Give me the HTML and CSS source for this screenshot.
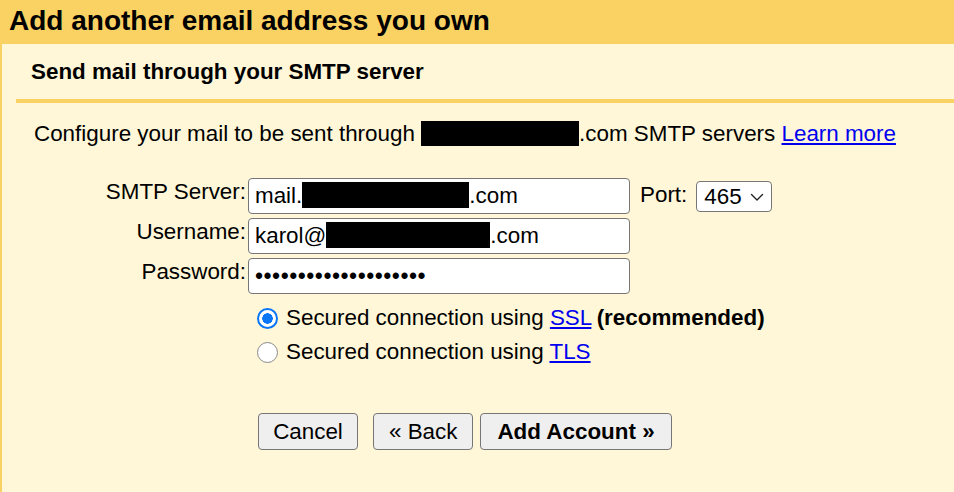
FILE: index.html
```html
<!DOCTYPE html>
<html lang="en">
  <head>
    <meta charset="UTF-8" />
    <title>Add another email address you own</title>
    <link rel="stylesheet" href="styles.css">
  </head>
  <body>
    <div class="page">
      <h1 class="title">Add another email address you own</h1>

      <div class="panel">
        <h2 class="subtitle">Send mail through your SMTP server</h2>

        <p class="intro">
          Configure your mail to be sent through <span class="redact redact-intro"></span>.com SMTP servers
          <a href="#">Learn more</a>
        </p>

        <div class="form">
          <label class="label" for="smtp">SMTP Server:</label>
          <div class="row">
            <div class="field">mail.<span class="redact redact-host"></span>.com</div>
            <label class="port-label" for="port">Port:</label>
            <div class="select-wrap">
              <select id="port" class="select">
                <option>465</option>
                <option>587</option>
                <option>25</option>
              </select>
              <svg class="chevron" width="14" height="9" viewBox="0 0 14 9">
                <path d="M1.5 1.5 L7 7 L12.5 1.5" fill="none" stroke="#222" stroke-width="1.4" stroke-linecap="round" stroke-linejoin="round"/>
              </svg>
            </div>
          </div>

          <label class="label" for="user">Username:</label>
          <div class="row">
            <div class="field">karol@<span class="redact redact-user"></span>.com</div>
          </div>

          <label class="label" for="pass">Password:</label>
          <div class="row">
            <input id="pass" class="field input" type="password" value="aaaaaaaaaaaaaaaaaaaa">
          </div>

          <div></div>
          <div class="options">
            <label class="option">
              <input type="radio" name="sec" class="radio" checked>
              <span>Secured connection using <a href="#">SSL</a> <b>(recommended)</b></span>
            </label>
            <label class="option">
              <input type="radio" name="sec" class="radio">
              <span>Secured connection using <a href="#">TLS</a></span>
            </label>
          </div>

          <div></div>
          <div class="buttons">
            <button class="btn btn-cancel">Cancel</button>
            <button class="btn btn-back">&laquo; Back</button>
            <button class="btn btn-primary">Add Account &raquo;</button>
          </div>
        </div>
      </div>
    </div>
  </body>
</html>
```

FILE: styles.css
```css
html,
body {
  margin: 0;
  height: 100%;
}
body {
  font-family: "Liberation Sans", Arial, sans-serif;
  color: #000;
  background-color: #fff7d7;
}
.page {
  min-height: 100%;
  border-left: 2px solid #fad163;
}
.title {
  margin: 0;
  height: 44px;
  padding-left: 7px;
  background-color: #fad163;
  font-size: 28px;
  line-height: 42px;
  font-weight: bold;
}
.panel {
  padding-left: 14px;
}
.subtitle {
  margin: 0;
  padding: 15px 0 0 15px;
  height: 40px;
  font-size: 22.4px;
  line-height: 26px;
  border-bottom: 4px solid #fad163;
}
.intro {
  margin: 17px 0 0 18px;
  font-size: 22.4px;
  line-height: 28px;
}
a {
  color: #0000ee;
  text-decoration: underline;
}
.redact {
  display: inline-block;
  background-color: #000;
  vertical-align: -5px;
}
.redact-intro {
  width: 158px;
  height: 25px;
}
.redact-host {
  width: 167px;
  height: 26px;
}
.redact-user {
  width: 164px;
  height: 26px;
}
.form {
  display: grid;
  grid-template-columns: 230px auto;
  column-gap: 2px;
  row-gap: 4px;
  margin-top: 30px;
  font-size: 22.4px;
}
.label {
  text-align: right;
  line-height: 28px;
}
.row {
  display: flex;
  align-items: flex-start;
}
.field {
  box-sizing: border-box;
  width: 382px;
  height: 36px;
  padding: 2px 6px 0;
  border: 1px solid #767676;
  border-radius: 4px;
  background-color: #fff;
  font-family: inherit;
  font-size: 22.4px;
  line-height: 30px;
  white-space: nowrap;
  overflow: hidden;
}
.input {
  margin: 0;
  padding-top: 0;
  font-size: 23px;
  letter-spacing: 0.5px;
  color: #000;
  outline: none;
}
.port-label {
  margin: 3px 9px 0 10px;
  line-height: 28px;
}
.select-wrap {
  position: relative;
  margin-top: 3px;
}
.select {
  appearance: none;
  box-sizing: border-box;
  width: 76px;
  height: 31px;
  padding: 0 0 0 7px;
  border: 1px solid #767676;
  border-radius: 4px;
  background-color: #fff;
  font-family: inherit;
  font-size: 22.4px;
  color: #000;
}
.chevron {
  position: absolute;
  right: 8px;
  top: 12px;
  pointer-events: none;
}
.options {
  display: flex;
  flex-direction: column;
  gap: 6px;
  margin-top: 6px;
  padding-left: 9px;
}
.option {
  display: flex;
  align-items: center;
  gap: 8px;
  line-height: 28px;
}
.option b {
  margin-left: -1px;
}
.radio {
  appearance: none;
  margin: 0;
  width: 21px;
  height: 21px;
  border: 1px solid #8a8a8a;
  border-radius: 50%;
  background-color: #fff;
  flex-shrink: 0;
}
.radio:checked {
  border: 2px solid #0a76f5;
  background: radial-gradient(circle, #0a76f5 0 5px, #fff 5.5px 100%);
  box-shadow: inset 0 0 0 1px #fff;
}
.buttons {
  display: flex;
  gap: 7px;
  margin-top: 43px;
  padding-left: 10px;
}
.btn {
  height: 37px;
  padding: 0 13px;
  border: 1px solid #767676;
  border-radius: 4px;
  background-color: #efefef;
  font-family: inherit;
  font-size: 22.4px;
  color: #000;
}
.btn-cancel {
  width: 100px;
  margin-right: 8px;
}
.btn-back {
  padding: 0 15px;
}
.btn-primary {
  font-weight: bold;
  padding: 0 16px;
}
```
